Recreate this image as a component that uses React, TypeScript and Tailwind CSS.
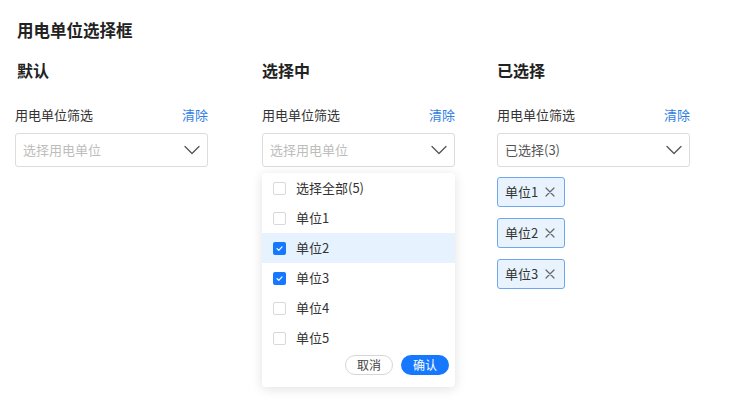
import { useState } from "react"

const font = { fontFamily: '"Noto Sans CJK SC", "Noto Sans", sans-serif' }

function Chevron() {
  return (
    <svg width="16" height="10" viewBox="0 0 16 10" fill="none" className="shrink-0">
      <path d="M1 1.5 L8 8.5 L15 1.5" stroke="#555" strokeWidth="1.3" strokeLinecap="round" strokeLinejoin="round" />
    </svg>
  )
}

function CloseIcon() {
  return (
    <svg width="10" height="10" viewBox="0 0 10 10" fill="none">
      <path d="M1 1 L9 9 M9 1 L1 9" stroke="#666" strokeWidth="1.2" strokeLinecap="round" />
    </svg>
  )
}

function Checkbox({ checked }: { checked: boolean }) {
  if (checked) {
    return (
      <span className="w-[13px] h-[13px] rounded-[2px] bg-[#1677ff] flex items-center justify-center shrink-0">
        <svg width="9" height="9" viewBox="0 0 9 9" fill="none">
          <path d="M2 4.6 L3.8 6.3 L7 2.8" stroke="#fff" strokeWidth="1.2" strokeLinecap="round" strokeLinejoin="round" />
        </svg>
      </span>
    )
  }
  return <span className="w-[13px] h-[13px] rounded-[2px] border border-[#d9d9d9] bg-white shrink-0" />
}

function FieldHeader() {
  return (
    <div className="flex items-center justify-between h-5 text-[13px]">
      <span className="text-[#333]">用电单位筛选</span>
      <span className="text-[#2f7de1]">清除</span>
    </div>
  )
}

function SelectBox({ text, placeholder }: { text: string; placeholder?: boolean }) {
  return (
    <div className="mt-2 h-[34px] border border-[#dcdcdc] rounded-[3px] bg-white flex items-center justify-between pl-[7px] pr-[7px]">
      <span className={placeholder ? "text-[13px] text-[#bdbdbd]" : "text-[13px] text-[#555]"}>{text}</span>
      <Chevron />
    </div>
  )
}

const options = [
  { label: "选择全部(5)", checked: false },
  { label: "单位1", checked: false },
  { label: "单位2", checked: true, active: true },
  { label: "单位3", checked: true },
  { label: "单位4", checked: false },
  { label: "单位5", checked: false },
]

export default function App() {
  const [tags] = useState(["单位1", "单位2", "单位3"])

  return (
    <div style={font} className="w-[730px] h-[413px] bg-white pt-[18px] pl-[15px] text-[#222] overflow-hidden">
      <h1 className="pl-[2px] text-[16.5px] leading-6 font-bold">用电单位选择框</h1>

      <div className="flex mt-4">
        <div className="w-[193px]">
          <h2 className="pl-[2px] text-[16px] leading-6 font-bold">默认</h2>
          <div className="mt-[23px]">
            <FieldHeader />
            <SelectBox text="选择用电单位" placeholder />
          </div>
        </div>

        <div className="w-[193px] ml-[54px]">
          <h2 className="text-[16px] leading-6 font-bold">选择中</h2>
          <div className="mt-[23px] relative">
            <FieldHeader />
            <SelectBox text="选择用电单位" placeholder />
            <div className="absolute left-0 top-[68px] w-[193px] bg-white rounded-[4px] shadow-[0_2px_12px_rgba(0,0,0,0.12)]">
              {options.map((o) => (
                <div
                  key={o.label}
                  className={
                    o.active
                      ? "h-[30px] flex items-center gap-[10px] pl-[11px] bg-[#e6f2fd]"
                      : "h-[30px] flex items-center gap-[10px] pl-[11px]"
                  }
                >
                  <Checkbox checked={o.checked} />
                  <span className="text-[13px] text-[#333]">{o.label}</span>
                </div>
              ))}
              <div className="flex justify-end gap-2 pt-[2px] pb-[12px] pr-[6px]">
                <button className="w-12 h-5 rounded-full border border-[#d6d6d6] text-[12px] text-[#444] bg-white leading-none">取消</button>
                <button className="w-12 h-5 rounded-full bg-[#1677ff] text-[12px] text-white leading-none">确认</button>
              </div>
            </div>
          </div>
        </div>

        <div className="w-[193px] ml-[42px]">
          <h2 className="text-[16px] leading-6 font-bold">已选择</h2>
          <div className="mt-[23px]">
            <FieldHeader />
            <SelectBox text="已选择(3)" />
            <div className="mt-[10px] flex flex-col items-start gap-[11px]">
              {tags.map((t) => (
                <div
                  key={t}
                  className="h-[30px] flex items-center gap-[7px] pl-[7px] pr-[9px] border border-[#6fa6ee] rounded-[3px] bg-[#e8f3fd]"
                >
                  <span className="text-[13px] text-[#333]">{t}</span>
                  <CloseIcon />
                </div>
              ))}
            </div>
          </div>
        </div>
      </div>
    </div>
  )
}
